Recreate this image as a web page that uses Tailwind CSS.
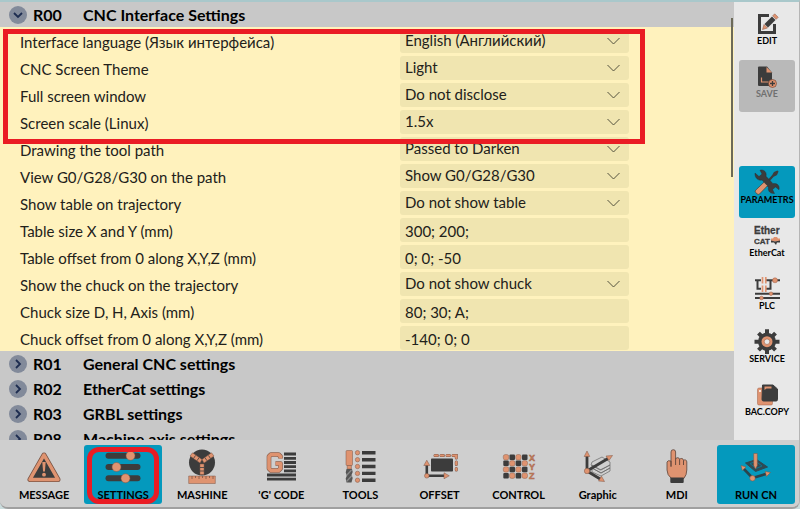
<!DOCTYPE html>
<html lang="en">
<head>
    <meta charset="UTF-8">
    <meta name="viewport" content="width=device-width, initial-scale=1.0">
    <title>CNC Settings</title>
    <script src="https://cdn.jsdelivr.net/npm/@tailwindcss/browser@4"></script>
</head>
<body class="bg-[#cbdcdd] font-['Lato','Noto_Sans',sans-serif] text-black">
    <div class="relative flex h-screen flex-col overflow-hidden rounded-b-lg border-t-2 border-r border-b-2 border-t-[#a9c8cb] border-r-[#b5b5b5] border-b-[#a0a0a0] bg-[#cfcfcf]">
        <div class="flex min-h-0 flex-1">
            <!-- Parameter groups -->
            <main class="relative min-w-0 flex-1 overflow-hidden bg-[#c8c8c8]">
                <button class="flex h-[25px] w-full items-center pl-[9px] text-left text-[16px] font-bold">
                    <svg class="size-[18px]" viewBox="0 0 18 18" fill="none"><circle cx="9" cy="9" r="9" fill="#828a9a"/><path d="M5 7l4 4 4-4" stroke="#1d2c50" stroke-width="1.8"/></svg>
                    <span class="ml-1.5 w-[50px]">R00</span><span>CNC Interface Settings</span>
                </button>
                <form id="params" class="bg-[#fff2bd] pl-5 text-[15px] text-[#22211a]"></form>
                <div id="groups"></div>
                <div class="absolute top-4 right-px h-[159px] w-[2px] bg-[#6c6a58]"></div>
            </main>

            <!-- Side menu -->
            <aside class="flex w-[65px] flex-col gap-px bg-[#e8e8e8] pt-[5px] pr-1 pl-[5px] text-[9px] leading-[10px] font-bold">
                <button class="flex h-[52px] flex-col items-center pt-[3px]">
                    <svg class="size-[26px]" viewBox="0 0 26 26"><path d="M15 5.500H5.500V22.500H20.500V14" fill="none" stroke="#3c3c3c" stroke-width="3"/><path d="M10.500 14L18 6.500l3.500 3.500-7.500 7.500z" fill="#3c3c3c"/><path d="M18.700 5.800l2-2 3.500 3.500-2 2zM10 14.500l3.500 3.500-5 1.500z" fill="#df9370" stroke="#8a5540" stroke-width=".5"/></svg>
                    <span>EDIT</span>
                </button>
                <button class="flex h-[52px] flex-col items-center rounded-[3px] bg-[#b9b9b9] pt-[3px] text-[#707070]" disabled>
                    <svg class="size-[26px]" viewBox="0 0 26 26"><path d="M5 3.500h8l5 6v13.500H5q-1 0-1-1V4.500q0-1 1-1z" fill="#3c3c3c"/><path d="M12.500 4v5.500H18z" fill="#df9370"/><path d="M7.500 14.500v4.500h7" fill="none" stroke="#df9370" stroke-width="1.200"/><circle cx="18.500" cy="20.500" r="4" fill="#df9370" stroke="#6b3a28" stroke-width=".6"/><path d="M18.500 18v5M16 20.500h5" stroke="#3c3c3c" stroke-width="1.300"/></svg>
                    <span>SAVE</span>
                </button>
                <div class="h-[52px]"></div>
                <button class="flex h-[52px] flex-col items-center rounded-[3px] bg-[#0499bd] pt-[3px]">
                    <svg class="size-[26px]" viewBox="0 0 26 26"><path d="M22 3.500L12.500 14" stroke="#3c3c3c" stroke-width="2.200"/><path d="M20 3l3.500-1.500 1 1L23 6l-2.500 1.500-2-2z" fill="#3c3c3c"/><path d="M1 4l4 3.500 3-2.500L6 1.200c4-1 7 2 6 6l7 7.500c4-1 7 2 6 6l-3.500-2.700-3 2.500 2 4c-4 .5-7-2.500-6-6L8 11c-4 1.200-7.500-2.500-7-7z" fill="#3c3c3c" stroke="#2b2b2b" stroke-width=".4"/><path d="M10 13.200l3.500 3.500-8 8.300q-1.300 1-2.500-.2l-1.300-1.300q-1-1.200 0-2.300z" fill="#df9370" stroke="#44342c" stroke-width=".6"/></svg>
                    <span>PARAMETRS</span>
                </button>
                <button class="flex h-[52px] flex-col items-center pt-[3px]">
                    <svg class="size-[26px]" viewBox="0 0 26 26"><g fill="#3c3c3c" stroke="#3c3c3c" stroke-width=".3" font-family="Liberation Sans"><text x="0" y="12" font-size="10">Ether</text><text x="0" y="22" font-size="8" font-weight="700">CAT</text></g><path d="M17 16.500h2l1-1.500h3l1 1.500h2v3h-9z" fill="#df9370"/><path d="M17 18.500l4 1 5-1v2h-3l-1 2.500-2-2.500h-3z" fill="#3c3c3c"/></svg>
                    <span>EtherCat</span>
                </button>
                <button class="flex h-[52px] flex-col items-center pt-[3px]">
                    <svg class="size-[26px]" viewBox="0 0 26 26"><path d="M1 5.300h6M12 5.300h14M3.500 5v8.700H7M11.500 13.700h5V5M1 18.700h25M1 23h25" fill="none" stroke="#3c3c3c" stroke-width="2"/><path d="M8.500 2v6.500M11.800 2v6.500M8.500 10.500V17M11.800 10.500V17" stroke="#df9370" stroke-width="1.700"/><g fill="#df9370" stroke="#a05f45" stroke-width=".5"><circle cx="21" cy="5.300" r="2.500"/><circle cx="17" cy="18.700" r="1.800"/><circle cx="7.500" cy="23" r="1.800"/></g></svg>
                    <span>PLC</span>
                </button>
                <button class="flex h-[52px] flex-col items-center pt-[3px]">
                    <svg class="size-[26px]" viewBox="0 0 26 26"><g stroke="#3c3c3c" stroke-width="4"><path d="M13 1.200v25M.5 13.700h25M4.500 5.200l17 17M21.500 5.200l-17 17"/></g><circle cx="13" cy="13.700" r="9" fill="#3c3c3c"/><circle cx="13" cy="13.700" r="5.500" fill="#df9370"/><circle cx="13" cy="13.700" r="2.800" fill="#e8e8e8" stroke="#a05f45" stroke-width=".6"/></svg>
                    <span>SERVICE</span>
                </button>
                <button class="flex h-[52px] flex-col items-center pt-[3px]">
                    <svg class="size-[26px]" viewBox="0 0 26 26"><rect x="3.500" y="7" width="15" height="17" rx="1.500" fill="#df9370" stroke="#a05f45" stroke-width=".5"/><circle cx="6" cy="10" r="1" fill="#fff"/><path d="M8.500 4h10.500l4.500 4v10.500q0 1.500-1.500 1.500H9.500q-1.500 0-1.500-1.500z" fill="#3c3c3c" stroke="#3c3c3c"/><path d="M10.500 5.500h7v2h-5l-2 1.500z" fill="#df9370"/></svg>
                    <span>BAC.COPY</span>
                </button>
            </aside>
        </div>

        <!-- Bottom menu -->
        <nav class="grid h-[67px] shrink-0 grid-cols-10 gap-px bg-[#cfcfcf] pt-[5px] pr-1 pb-[3px] pl-[5px] text-[11px] leading-[14px] font-bold">
            <button class="flex flex-col items-center pt-[3px]">
                <svg class="size-9" viewBox="0 0 36 36"><path d="M18 7L4 31.500h28z" fill="#3c3c3c" stroke="#7c5545" stroke-width="5" stroke-linejoin="round"/><path d="M18 7L4 31.500h28z" fill="#3c3c3c" stroke="#df9370" stroke-width="3.500" stroke-linejoin="round"/><path d="M16.300 14h3.400l-.8 9.500h-1.800z" fill="#df9370"/><circle cx="18" cy="26.700" r="1.900" fill="#df9370"/></svg>
                <span class="mt-1">MESSAGE</span>
            </button>
            <button class="relative flex flex-col items-center rounded-[3px] bg-[#0499bd] pt-[3px]">
                <svg class="size-9" viewBox="0 0 36 36"><g fill="#3c3c3c"><rect x=".5" y="4.800" width="35" height="6" rx="3"/><rect x=".5" y="16" width="35" height="6" rx="3"/><rect x=".5" y="27.300" width="35" height="6" rx="3"/></g><g fill="#df9370" stroke="#7c5545" stroke-width=".5"><circle cx="25.500" cy="7.800" r="4.500"/><circle cx="11.500" cy="19" r="4.500"/><circle cx="20.500" cy="30.300" r="4.500"/></g></svg>
                <span class="mt-1">SETTINGS</span>
                <span class="absolute inset-x-[3px] top-[2px] bottom-0 rounded-xl border-5 border-[#ea1c24]"></span>
            </button>
            <button class="flex flex-col items-center pt-[3px]">
                <svg class="size-9" viewBox="0 0 36 36"><circle cx="18" cy="14.500" r="13" fill="#3c3c3c"/><g fill="#df9370" stroke="#7c5545" stroke-width=".5"><path d="M16 16h4v10.500h-4zM6 8l2.500-3.200 9.500 6.700-2 3.500zM30 8l-2.500-3.200-9.500 6.700 2 3.500z"/><path d="M16 19.500h4M16 23h4M9.500 10.500l2-3M13 12.700l2-3M26.500 10.500l-2-3M23 12.700l-2-3" stroke="#3c3c3c" stroke-width=".8"/><path d="M4.700 28h26.600v7.500H4.700z"/></g><path d="M8 28v3M11.500 28v2M15 28v3M18.500 28v2M22 28v3M25.500 28v2M29 28v3" stroke="#7c5545" stroke-width=".8"/></svg>
                <span class="mt-1">MASHINE</span>
            </button>
            <button class="flex flex-col items-center pt-[3px]">
                <svg class="size-9" viewBox="0 0 36 36"><g fill="none" stroke-linejoin="round"><path d="M17.500 10.500V8.500L15.500 6.500H8L6 8.500v12l2 2h7.500l2-2V15.500h-5" stroke="#7c5545" stroke-width="4.600"/><path d="M17.500 10.500V8.500L15.500 6.500H8L6 8.500v12l2 2h7.500l2-2V15.500h-5" stroke="#df9370" stroke-width="3.600"/></g><path d="M21 6h12M21 10.300h12M21 14.500h12M21 18.700h12M21 22.800h12M4 27h29M4 31.200h29" stroke="#3c3c3c" stroke-width="2.800"/></svg>
                <span class="mt-1">'G' CODE</span>
            </button>
            <button class="flex flex-col items-center pt-[3px]">
                <svg class="size-9" viewBox="0 0 36 36"><g fill="#df9370" stroke="#7c5545" stroke-width=".5"><rect x="4" y="2.500" width="6.500" height="15" rx="1"/><path d="M5.200 17.500h4.200V21H5.200z"/><circle cx="15.500" cy="4.700" r="2.200"/><circle cx="15.500" cy="11.700" r="2.200"/><circle cx="15.500" cy="18.500" r="2.200"/><circle cx="15.500" cy="25.400" r="2.200"/><circle cx="15.500" cy="32.200" r="2.200"/></g><path d="M4.500 21h5.500l.7 3-1.200 3 1.200 3-1.200 4.500H4.500l-.8-4 1.200-3-1.200-3z" fill="#555"/><path d="M4.500 27.500l5-5.500M4.500 33.500l5.500-6" stroke="#8a8a8a" stroke-width="1.200"/><path d="M20 4.700h13.500M20 11.700h13.500M20 18.500h13.500M20 25.400h13.500M20 32.200h13.500" stroke="#3c3c3c" stroke-width="3.400"/></svg>
                <span class="mt-1">TOOLS</span>
            </button>
            <button class="flex flex-col items-center pt-[3px]">
                <svg class="size-9" viewBox="0 0 36 36"><rect x="9" y="10.500" width="22" height="13" rx=".8" fill="#3c3c3c"/><g fill="none" stroke-linecap="round"><path d="M13 7.500h2.500M19 7.500h2.500M25 7.500h2.500M31 7.500h3.300v2.500M34.300 14v2.500M34.300 20.500v1.500" stroke="#7c5545" stroke-width="3"/><path d="M13 7.500h2.500M19 7.500h2.500M25 7.500h2.500M31 7.500h3.300v2.500M34.300 14v2.500M34.300 20.500v1.500" stroke="#df9370" stroke-width="2.200"/></g><path d="M4.800 16v11.800H24" fill="none" stroke="#3c3c3c" stroke-width="2.600"/><g fill="#df9370" stroke="#7c5545" stroke-width=".5"><path d="M4.800 12.200l3 5.300h-6zM27.300 27.800l-5.300 3v-6z"/><circle cx="4.800" cy="27.800" r="2.300"/></g></svg>
                <span class="mt-1">OFFSET</span>
            </button>
            <button class="flex flex-col items-center pt-[3px]">
                <svg class="size-9" viewBox="0 0 36 36"><g fill="#3c3c3c"><rect x="8.500" y="6.500" width="5.500" height="5.500" rx="1"/><rect x="21" y="6.500" width="5.500" height="5.500" rx="1"/><rect x="2.300" y="12.600" width="5.500" height="5.500" rx="1"/><rect x="14.700" y="12.600" width="5.500" height="5.500" rx="1"/><rect x="8.500" y="18.700" width="5.500" height="5.500" rx="1"/><rect x="21" y="18.700" width="5.500" height="5.500" rx="1"/><rect x="2.300" y="24.900" width="5.500" height="5.500" rx="1"/><rect x="14.700" y="24.900" width="5.500" height="5.500" rx="1"/></g><g fill="#df9370" stroke="#7c5545" stroke-width=".4"><rect x="2.300" y="6.500" width="5.500" height="5.500" rx="2"/><rect x="14.700" y="6.500" width="5.500" height="5.500" rx="2"/><rect x="8.500" y="12.600" width="5.500" height="5.500" rx="2"/><rect x="21" y="12.600" width="5.500" height="5.500" rx="2"/><rect x="2.300" y="18.700" width="5.500" height="5.500" rx="2"/><rect x="14.700" y="18.700" width="5.500" height="5.500" rx="2"/><rect x="8.500" y="24.900" width="5.500" height="5.500" rx="2"/><rect x="21" y="24.900" width="5.500" height="5.500" rx="2"/></g><g fill="#c9805f" stroke="#a8694e" stroke-width=".5" font-family="Liberation Sans" font-size="9" font-weight="700"><text x="28" y="13">X</text><text x="28" y="21.800">Y</text><text x="28" y="30.500">Z</text></g></svg>
                <span class="mt-1">CONTROL</span>
            </button>
            <button class="flex flex-col items-center pt-[3px]">
                <svg class="size-9" viewBox="0 0 36 36"><g fill="none" stroke="#666" stroke-width=".7"><path d="M12 14l10-5 8 5v3l-10 5-9-5zM12 17l9 5 9-5v3l-9 5-9-5zM12 20l9 5 9-5v3l-9 5-9-4z"/></g><path d="M7 7v16L28 10.500M7 23l14 8.500" fill="none" stroke="#3c3c3c" stroke-width="2.800"/><g fill="#df9370" stroke="#7c5545" stroke-width=".5"><path d="M7 3l2.800 5.500H4.200zM32.500 7.500l-3.500 5-3-4.500zM24.500 33.500l-6-.5 3-4.800z"/><circle cx="7" cy="23" r="2.700"/></g></svg>
                <span class="mt-1">Graphic</span>
            </button>
            <button class="flex flex-col items-center pt-[3px]">
                <svg class="size-9" viewBox="0 0 36 36"><path d="M12 18V4q0-2.300 2.300-2.300T16.600 4v7q.5-1.500 2.200-1.300 1.800.2 1.800 1.800.7-1.200 2.200-1 1.700.2 1.700 2 .7-.8 1.800-.6 1.500.3 1.500 2V22q0 5-3 8.500H12.500Q8 27 8 22v-8q.5-2 4-1" fill="#df9370" stroke="#5c4238" stroke-width=".8"/><path d="M12 13v6M16.600 11v6M20.600 11.500V17M24.500 12.500V17" fill="none" stroke="#5c4238" stroke-width=".9"/><path d="M11.300 29.500h13.400v4.500q0 1-1 1H12.300q-1 0-1-1z" fill="#3c3c3c"/></svg>
                <span class="mt-1">MDI</span>
            </button>
            <button class="flex flex-col items-center rounded-[3px] bg-[#0499bd] pt-[3px]">
                <svg class="size-9" viewBox="0 0 36 36"><path d="M7.500 15l11-3.500 11 7.500-12 4.500z" fill="#2f4a53" stroke="#2f4a53" stroke-linejoin="round"/><path d="M12 15.500l6-2 6 4.500-6 2.500z" fill="none" stroke="#0d7690"/><path d="M5 20l9.500 10 15-4.500" fill="none" stroke="#2b444c" stroke-width="2.600"/><g fill="#df9370" stroke="#7c5545" stroke-width=".5"><path d="M15.700 5.500h3.600v12L17.500 21l-1.800-3.500zM3 17.500l5 1.500-3.700 3.500zM32.500 24.500l-4 4-1.300-5z"/><circle cx="14.500" cy="30.300" r="2.700"/></g></svg>
                <span class="mt-1">RUN CN</span>
            </button>
        </nav>

        <!-- Highlight frame -->
        <div class="pointer-events-none absolute top-[27px] left-[3px] h-[115px] w-[642px] border-5 border-[#ea1c24]"></div>
    </div>

    <script>
        // type 's' is a drop-down, 'i' a free text value
        const params = [
            ['s', 'Interface language (Язык интерфейса)', 'English (Английский)'],
            ['s', 'CNC Screen Theme', 'Light'],
            ['s', 'Full screen window', 'Do not disclose'],
            ['s', 'Screen scale (Linux)', '1.5x'],
            ['s', 'Drawing the tool path', 'Passed to Darken'],
            ['s', 'View G0/G28/G30 on the path', 'Show G0/G28/G30'],
            ['s', 'Show table on trajectory', 'Do not show table'],
            ['i', 'Table size X and Y (mm)', '300; 200;'],
            ['i', 'Table offset from 0 along X,Y,Z (mm)', '0; 0; -50'],
            ['s', 'Show the chuck on the trajectory', 'Do not show chuck'],
            ['i', 'Chuck size D, H, Axis (mm)', '80; 30; A;'],
            ['i', 'Chuck offset from 0 along X,Y,Z (mm)', '-140; 0; 0'],
        ];
        document.getElementById('params').innerHTML = params.map(([type, label, value], i) => {
            const field = type === 's'
                ? `<select id="p${i}" class="block h-6 w-full appearance-none rounded-[3px] bg-[#f0e5b0] pb-[3px] pl-[5px]"><option>${value}</option></select>
                   <svg class="pointer-events-none absolute top-2 right-[9px] h-2 w-[13px]" viewBox="0 0 13 8" fill="none"><path d="M.5 1l6 6 6-6" stroke="#55523f"/></svg>`
                : `<input id="p${i}" value="${value}" class="block h-6 w-full rounded-[3px] bg-[#f0e5b0] pt-px pl-[5px]">`;
            return `<div class="flex h-[27px] pt-[2px]"><label for="p${i}" class="w-[380px] pt-px leading-6">${label}</label><div class="relative w-[229px]">${field}</div></div>`;
        }).join('');

        const groups = [['R01', 'General CNC settings'], ['R02', 'EtherCat settings'], ['R03', 'GRBL settings'], ['R08', 'Machine axis settings']];
        document.getElementById('groups').innerHTML = groups.map(([code, name]) => `
            <button class="flex h-[25px] w-full items-center pl-[9px] text-left text-[16px] font-bold">
                <svg class="size-[18px]" viewBox="0 0 18 18" fill="none"><circle cx="9" cy="9" r="9" fill="#828a9a"/><path d="M7 5l4 4-4 4" stroke="#1d2c50" stroke-width="1.8"/></svg>
                <span class="ml-1.5 w-[50px]">${code}</span><span>${name}</span>
            </button>`).join('');
    </script>
</body>
</html>
